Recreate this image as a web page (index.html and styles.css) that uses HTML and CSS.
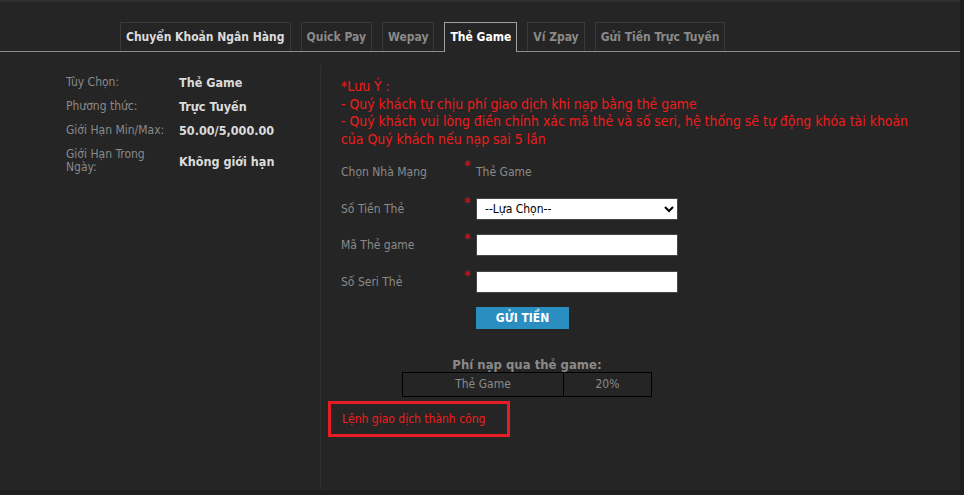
FILE: index.html
```html
<!DOCTYPE html>
<html lang="vi">
<head>
    <meta charset="UTF-8">
    <title>Thẻ Game</title>
    <link rel="stylesheet" href="styles.css">
</head>
<body>
    <div class="page">
        <ul class="tabs">
            <li class="tab tab-bright">Chuyển Khoản Ngân Hàng</li>
            <li class="tab">Quick Pay</li>
            <li class="tab">Wepay</li>
            <li class="tab active">Thẻ Game</li>
            <li class="tab">Ví Zpay</li>
            <li class="tab">Gửi Tiền Trực Tuyến</li>
        </ul>

        <div class="content">
            <div class="info">
                <div class="info-row">
                    <div class="info-label">Tùy Chọn:</div>
                    <div class="info-value">Thẻ Game</div>
                </div>
                <div class="info-row">
                    <div class="info-label">Phương thức:</div>
                    <div class="info-value">Trực Tuyến</div>
                </div>
                <div class="info-row">
                    <div class="info-label">Giới Hạn Min/Max:</div>
                    <div class="info-value">50.00/5,000.00</div>
                </div>
                <div class="info-row">
                    <div class="info-label">Giới Hạn Trong Ngày:</div>
                    <div class="info-value">Không giới hạn</div>
                </div>
            </div>

            <div class="main">
                <div class="notice">
                    *Lưu Ý :<br>
                    - Quý khách tự chịu phí giao dịch khi nạp bằng thẻ game<br>
                    - Quý khách vui lòng điền chính xác mã thẻ và số seri, hệ thống sẽ tự động khóa tài khoản của Quý khách nếu nạp sai 5 lần
                </div>

                <form class="form">
                    <div class="form-row">
                        <label class="form-label">Chọn Nhà Mạng</label>
                        <span class="req">*</span>
                        <span class="form-text">Thẻ Game</span>
                    </div>
                    <div class="form-row">
                        <label class="form-label">Số Tiền Thẻ</label>
                        <span class="req">*</span>
                        <select class="field">
                            <option>--Lựa Chọn--</option>
                        </select>
                    </div>
                    <div class="form-row">
                        <label class="form-label">Mã Thẻ game</label>
                        <span class="req">*</span>
                        <input class="field" type="text">
                    </div>
                    <div class="form-row">
                        <label class="form-label">Số Seri Thẻ</label>
                        <span class="req">*</span>
                        <input class="field" type="text">
                    </div>
                    <div class="form-row">
                        <span class="form-label"></span>
                        <span class="req"></span>
                        <button type="button" class="btn">GỬI TIỀN</button>
                    </div>
                </form>

                <div class="fee">
                    <div class="fee-title">Phí nạp qua thẻ game:</div>
                    <table class="fee-table">
                        <tr>
                            <td class="fee-name">Thẻ Game</td>
                            <td class="fee-rate">20%</td>
                        </tr>
                    </table>
                </div>

                <div class="result">Lệnh giao dịch thành công</div>
            </div>
        </div>
    </div>
</body>
</html>
```

FILE: styles.css
```css
* {
    margin: 0;
    padding: 0;
    box-sizing: border-box;
}

body {
    background: #1e1e1e;
    font-family: "DejaVu Sans Condensed", "DejaVu Sans", sans-serif;
    font-size: 12px;
    color: #8a8a8a;
}

.page {
    width: 960px;
    height: 490px;
    background: #252525;
    border-top: 2px solid #303030;
    overflow: hidden;
}

/* tabs */
.tabs {
    list-style: none;
    display: flex;
    gap: 10px;
    padding: 20px 0 0 120px;
    border-bottom: 1px solid #8c8c8c;
}

.tab {
    height: 29px;
    line-height: 29px;
    padding: 0 5px;
    border: 1px solid #3a3a3a;
    border-bottom: none;
    font-size: 12px;
    font-weight: bold;
    color: #8a8a8a;
}

.tab-bright {
    color: #dcdcdc;
}

.tab.active {
    border-color: #a0a0a0;
    color: #ffffff;
    background: #252525;
    margin-bottom: -1px;
    height: 30px;
}

/* content */
.content {
    display: flex;
    margin-top: 13px;
    height: 430px;
}

.info {
    width: 321px;
    border-right: 1px solid #2f2f2f;
    padding: 5px 0 0 66px;
}

.info-row {
    display: flex;
    align-items: center;
    min-height: 24px;
}

.info-row:last-child {
    min-height: 38px;
}

.info-label {
    width: 113px;
    padding-right: 10px;
    color: #8a8a8a;
    line-height: 13px;
}

.info-value {
    font-size: 12.5px;
    font-weight: bold;
    color: #dcdcdc;
}

.main {
    flex: 1;
    padding: 13px 0 0 20px;
}

.notice {
    color: #f01c1c;
    font-size: 13.9px;
    line-height: 17.5px;
    width: 580px;
}

.form {
    margin-top: 6px;
}

.form-row {
    display: flex;
    align-items: center;
    height: 36.5px;
}

.form-label {
    width: 123px;
    color: #8a8a8a;
}

.req {
    width: 12px;
    color: #d0101a;
    font-size: 14px;
    font-weight: bold;
    align-self: flex-start;
    margin-top: 3px;
}

.form-text {
    color: #8a8a8a;
}

.field {
    width: 202px;
    height: 22px;
    border: 1px solid #444;
    background: #fff;
    font-family: "DejaVu Sans Condensed", "DejaVu Sans", sans-serif;
    font-size: 12px;
    color: #000;
    padding: 0 4px;
}

.btn {
    width: 93px;
    height: 22px;
    border: none;
    background: #2b8ec1;
    color: #fff;
    font-family: "DejaVu Sans Condensed", "DejaVu Sans", sans-serif;
    font-size: 12px;
    font-weight: bold;
}

.fee {
    width: 250px;
    margin: 21px 0 0 61px;
    text-align: center;
}

.fee-title {
    font-size: 13px;
    font-weight: bold;
    color: #8a8a8a;
    line-height: 14px;
}

.fee-table {
    width: 250px;
    border-collapse: collapse;
    margin-top: 0;
}

.fee-table td {
    border: 1px solid #000;
    height: 24px;
    color: #8a8a8a;
    text-align: center;
}

.fee-name {
    width: 161px;
}

.result {
    width: 182px;
    height: 36px;
    margin: 4px 0 0 -13px;
    border: 3px solid #e81c24;
    padding-left: 11px;
    line-height: 30px;
    color: #f01c1c;
}
```
